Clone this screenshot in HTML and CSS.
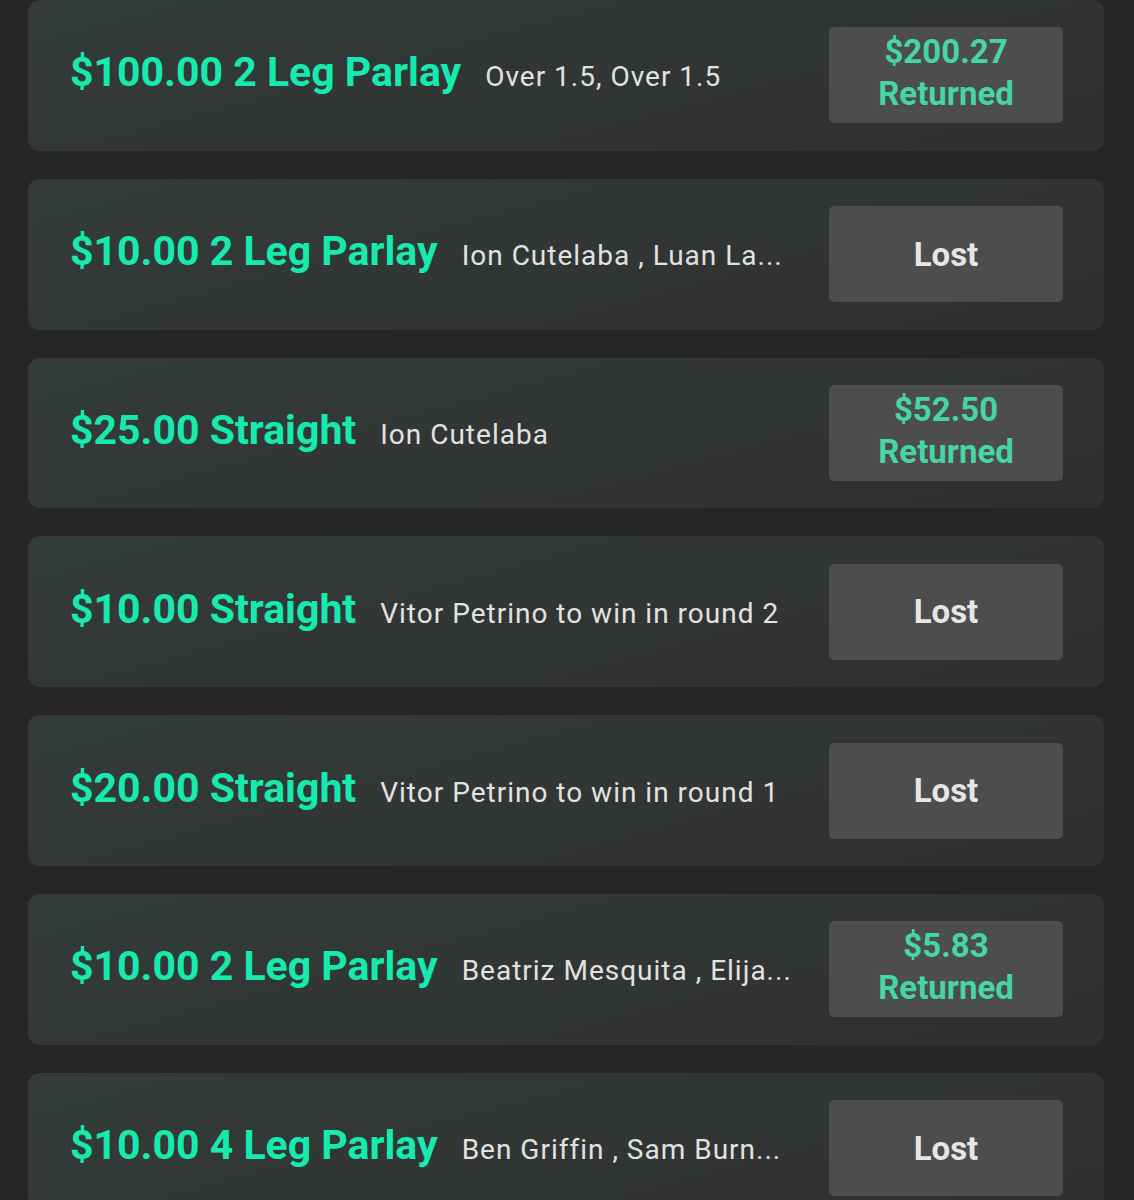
FILE: index.html
```html
<!DOCTYPE html>
<html lang="en">
<head>
<meta charset="utf-8">
<title>Bets</title>
<link rel="stylesheet" href="styles.css">
</head>
<body>
<main class="list">
  <div class="bet">
    <div class="info"><span class="title">$100.00 2 Leg Parlay</span><span class="desc">Over 1.5, Over 1.5</span></div>
    <div class="status won"><span>$200.27</span><span>Returned</span></div>
  </div>
  <div class="bet">
    <div class="info"><span class="title">$10.00 2 Leg Parlay</span><span class="desc">Ion Cutelaba , Luan La...</span></div>
    <div class="status lost">Lost</div>
  </div>
  <div class="bet">
    <div class="info"><span class="title">$25.00 Straight</span><span class="desc">Ion Cutelaba</span></div>
    <div class="status won"><span>$52.50</span><span>Returned</span></div>
  </div>
  <div class="bet">
    <div class="info"><span class="title">$10.00 Straight</span><span class="desc">Vitor Petrino to win in round 2</span></div>
    <div class="status lost">Lost</div>
  </div>
  <div class="bet">
    <div class="info"><span class="title">$20.00 Straight</span><span class="desc">Vitor Petrino to win in round 1</span></div>
    <div class="status lost">Lost</div>
  </div>
  <div class="bet">
    <div class="info"><span class="title">$10.00 2 Leg Parlay</span><span class="desc">Beatriz Mesquita , Elija...</span></div>
    <div class="status won"><span>$5.83</span><span>Returned</span></div>
  </div>
  <div class="bet">
    <div class="info"><span class="title">$10.00 4 Leg Parlay</span><span class="desc">Ben Griffin , Sam Burn...</span></div>
    <div class="status lost">Lost</div>
  </div>
</main>
</body>
</html>
```

FILE: styles.css
```css
html, body {
  margin: 0;
  padding: 0;
  background: #262626;
  font-family: Roboto, "Liberation Sans", sans-serif;
}

.list {
  display: flex;
  flex-direction: column;
  gap: 28px;
  padding: 0 30px 0 28px;
}

.bet {
  height: 150.8px;
  box-sizing: border-box;
  display: flex;
  align-items: center;
  padding: 0 41px 0 42px;
  border-radius: 12px;
  background: linear-gradient(165deg, #333c39 0%, #313533 55%, #2f3030 100%);
}

.info {
  flex: 1;
  min-width: 0;
  display: flex;
  align-items: baseline;
  margin-right: 30px;
  margin-bottom: 6px;
}

.title {
  font-size: 41px;
  font-weight: 700;
  color: #17eab1;
  white-space: nowrap;
  flex: none;
}

.desc {
  flex: 1;
  min-width: 0;
  margin-left: 24px;
  font-size: 28px;
  letter-spacing: 1px;
  color: #e2e2e2;
  white-space: nowrap;
  overflow: hidden;
  text-overflow: ellipsis;
}

.status {
  flex: none;
  width: 234px;
  height: 96px;
  border-radius: 5px;
  background: #4d4d4d;
  display: flex;
  flex-direction: column;
  align-items: center;
  justify-content: center;
  font-weight: 700;
  font-size: 33px;
}

.status.lost {
  color: #e6e6e6;
}

.status.won {
  color: #46d5a5;
  line-height: 42px;
  padding-bottom: 4px;
  box-sizing: border-box;
}
```
